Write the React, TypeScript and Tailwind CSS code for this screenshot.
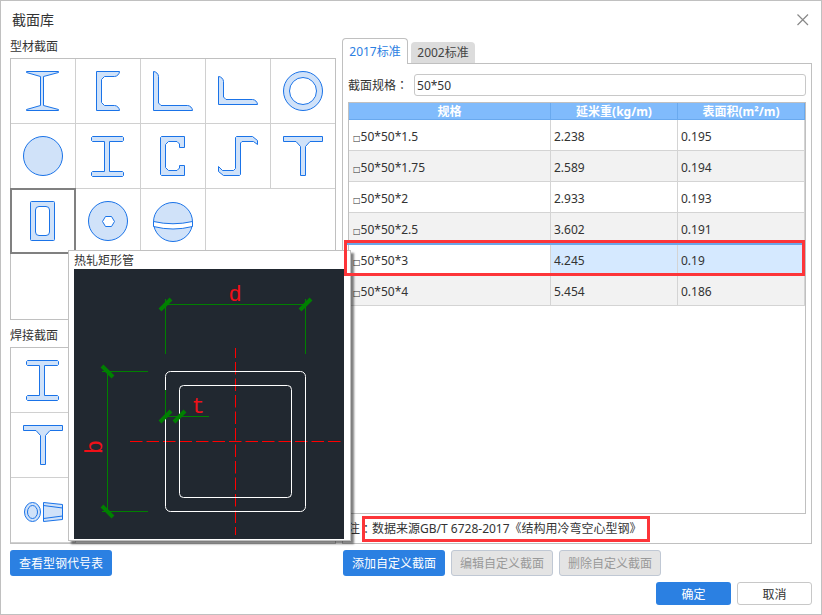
import React, { useMemo, useState } from "react";

type Shape = {
  id: string;
  name: string;
  icon: React.ReactNode;
};

type SpecRow = {
  spec: string;
  weight: string;
  area: string;
};

const FILL = "#d0e2f9";
const STROKE = "#1a73e8";

// 型钢截面图标
const beamIcon = <path d="M4.5 .5H34.5L35.5 1.5V4.5L34.5 5.5H21.5V35.5H34.5L35.5 36.5V39.5L34.5 40.5H4.5L3.5 39.5V36.5L4.5 35.5H16.5V5.5H4.5L3.5 4.5V1.5Z" />;
const teeIcon = <path d="M.5 .5H39.5V5.5H27L22.5 10.5V39.5H17.5V10.5L13 5.5H.5Z" />;

const PROFILE_SHAPES: Shape[] = [
  { id: "i", name: "工字钢", icon: <path d="M3.5 .5H35.5V1.5L20.5 5.5V34.5L35.5 38.5V39.5H3.5V38.5L17.5 34.5V5.5L3.5 1.5Z" /> },
  { id: "channel", name: "槽钢", icon: <path d="M8.5 .5H31.5C31.5 3 29 5.5 26.5 5.5H16.5L13.5 8.5V31.5L16.5 34.5H26.5C29 34.5 31.5 37 31.5 39.5H8.5Z" /> },
  { id: "angle", name: "等边角钢", icon: <path d="M.5 .5C3 .5 5.5 3 5.5 5.5V32L8 34.5H34.5C37 34.5 39.5 37 39.5 39.5H.5Z" /> },
  { id: "angle2", name: "不等边角钢", icon: <path d="M.5 5.5C3 5.5 5.5 8 5.5 10.5V26L8 28.5H34.5C37 28.5 39.5 31 39.5 33.5H.5Z" /> },
  {
    id: "pipe",
    name: "钢管",
    icon: (
      <>
        <circle cx="20" cy="20" r="19.5" />
        <circle cx="20" cy="20" r="13.5" fill="#fff" />
      </>
    ),
  },
  { id: "round", name: "圆钢", icon: <circle cx="20" cy="20" r="19.5" /> },
  { id: "h", name: "H型钢", icon: beamIcon },
  { id: "c", name: "C型钢", icon: <path d="M8.5 .5H31.5V11.5H26.5V8L24 5.5H15.5L12.5 8.5V31.5L15.5 34.5H24L26.5 32V29.5H31.5V39.5H8.5L7.5 38.5V1.5Z" /> },
  { id: "z", name: "Z型钢", icon: <path d="M18.5 .5H34.5L39.5 4.5V8.5L35.5 5.5H24L22.5 7V38.5L21.5 39.5H5.5L.5 35.5V30.5L4.5 34.5H15.5L17.5 32.5V1.5Z" /> },
  { id: "t", name: "T型钢", icon: teeIcon },
  {
    id: "rect",
    name: "热轧矩形管",
    icon: (
      <>
        <rect x="7.5" y=".5" width="24" height="39" rx="1" />
        <rect x="12.5" y="5.5" width="14" height="29" rx="3.5" fill="#fff" />
      </>
    ),
  },
  {
    id: "bolt",
    name: "螺栓球",
    icon: (
      <>
        <circle cx="20" cy="20" r="19.5" />
        <path d="M14.5 20.5L17.5 15.5H23.5L26.5 20.5L23.5 25.5H17.5Z" fill="#fff" />
      </>
    ),
  },
  {
    id: "ball",
    name: "焊接球",
    icon: (
      <>
        <circle cx="20" cy="21" r="19.5" />
        <path d="M.5 20.5Q20 25 39.5 20.5V25.5Q20 30.5 .5 25.5Z" fill="#fff" />
      </>
    ),
  },
];

const WELD_SHAPES: Shape[] = [
  { id: "weld-h", name: "焊接H型钢", icon: beamIcon },
  { id: "weld-t", name: "焊接T型钢", icon: teeIcon },
  {
    id: "cone",
    name: "锥管",
    icon: (
      <>
        <ellipse cx="9.5" cy="22" rx="8" ry="9.5" />
        <ellipse cx="9.5" cy="22" rx="5" ry="6.5" />
        <path d="M20.5 12.5L39.5 14.5V29.5L20.5 31.5Z" />
        <path d="M20.5 15.5L39.5 18M20.5 28.5L39.5 26" />
      </>
    ),
  },
];

const SPECS: Record<string, SpecRow[]> = {
  "2017标准": [
    { spec: "50*50*1.5", weight: "2.238", area: "0.195" },
    { spec: "50*50*1.75", weight: "2.589", area: "0.194" },
    { spec: "50*50*2", weight: "2.933", area: "0.193" },
    { spec: "50*50*2.5", weight: "3.602", area: "0.191" },
    { spec: "50*50*3", weight: "4.245", area: "0.19" },
    { spec: "50*50*4", weight: "5.454", area: "0.186" },
  ],
  "2002标准": [],
};

const TABS = ["2017标准", "2002标准"];

// 全角冒号居中显示
function Colon() {
  return <span className="font-['Noto_Sans_CJK_TC',sans-serif]">：</span>;
}

function SectionDiagram() {
  return (
    <svg width="270" height="270" viewBox="0 0 270 270" className="block bg-[#212830]" fill="none">
      {/* 中心线 */}
      <g stroke="#f00" strokeDasharray="12.5 4">
        <path d="M161.5 79V89M161.5 93V266" />
        <path d="M56 172.5H267" />
      </g>
      {/* 截面轮廓 */}
      <g stroke="#fff">
        <rect x="91.5" y="102.5" width="140" height="140" rx="5" />
        <rect x="105.5" y="116.5" width="112" height="112" rx="4" />
      </g>
      {/* 尺寸线 */}
      <g stroke="#008000">
        <path d="M91.5 30V85M231.5 30V85M91.5 35.5H231.5" />
        <path d="M28 102.5H74M28 242.5H74M33.5 102.5V242.5" />
        <path d="M91.5 121V147.5H135" />
        <path strokeWidth="4" d="M86 41L97 30M226 41L237 30M86 153L97 142M100 153L111 142M28 97L39 108M28 237L39 248" />
      </g>
      <g fill="#f01018" fontFamily="Liberation Mono, monospace" fontSize="24" textAnchor="middle">
        <text x="161" y="32" fontSize="22">
          d
        </text>
        <text x="124" y="144" fontSize="22">
          t
        </text>
        <text transform="translate(28 178) rotate(-90)">b</text>
      </g>
    </svg>
  );
}

type ShapeListProps = {
  shapes: Shape[];
  selected: string;
  hovered?: string;
  onSelect: (id: string) => void;
  className: string;
};

function ShapeList({ shapes, selected, hovered, onSelect, className }: ShapeListProps) {
  return (
    <ul className={className}>
      {shapes.map((s) => (
        <li key={s.id} className="relative border-r border-b border-[#d0d0d0]">
          <button
            aria-label={s.name}
            onClick={() => onSelect(s.id)}
            className={
              selected === s.id
                ? "flex h-full w-full items-center justify-center outline-2 -outline-offset-1 outline-[#808080]"
                : "flex h-full w-full items-center justify-center"
            }
          >
            <svg width="40" height="40" viewBox="0 0 40 40" className="overflow-visible" fill={FILL} stroke={STROKE}>
              {s.icon}
            </svg>
          </button>

          {hovered === s.id && (
            <div className="absolute top-[61px] left-[57px] z-10 w-[283px] border border-[#c0c0c0] bg-white pr-1.5 pb-px pl-[5px] shadow-[3px_3px_2px_rgba(0,0,0,0.5)]">
              <p className="h-[18px] leading-5">{s.name}</p>
              <SectionDiagram />
            </div>
          )}
        </li>
      ))}
    </ul>
  );
}

export default function App() {
  const [tab, setTab] = useState("2017标准");
  const [shape, setShape] = useState("rect");
  const [keyword, setKeyword] = useState("50*50");
  const [current, setCurrent] = useState("50*50*3");

  const rows = useMemo(() => SPECS[tab].filter((r) => r.spec.includes(keyword.trim())), [tab, keyword]);

  return (
    <main className="flex min-h-screen flex-col border border-[#c0c0c0] bg-white px-[9px] pb-[9px] font-['Noto_Sans','Noto_Sans_CJK_SC',sans-serif] text-xs leading-4 text-[#333]">
      <header className="flex h-[37px] items-center justify-between pr-[3px] pl-0.5">
        <h1 className="text-sm">截面库</h1>
        <button aria-label="关闭">
          <svg width="12" height="12" viewBox="0 0 12 12" fill="none" stroke="#888" strokeWidth="1.2">
            <path d="M.5 .5L11 11M11 .5L.5 11" />
          </svg>
        </button>
      </header>

      <div className="flex flex-1 gap-1.5">
        {/* 左侧：截面类型 */}
        <div className="flex w-[326px] shrink-0 flex-col">
          <h2 className="h-5 leading-[18px]">型材截面</h2>
          <div className="h-[262px] border border-[#c0c0c0]">
            <ShapeList
              shapes={PROFILE_SHAPES}
              selected={shape}
              hovered="rect"
              onSelect={setShape}
              className="grid auto-rows-[65px] grid-cols-[repeat(4,65px)_1fr] [&>li:nth-child(5n)]:border-r-0"
            />
          </div>
          <h2 className="flex h-[27px] items-center pt-1">焊接截面</h2>
          <div className="min-h-[197px] flex-1 border border-[#c0c0c0]">
            <ShapeList shapes={WELD_SHAPES} selected={shape} onSelect={setShape} className="grid auto-rows-[65px] grid-cols-[65px]" />
          </div>
        </div>

        {/* 右侧：规格表 */}
        <div className="flex min-w-0 flex-1 flex-col">
          <div role="tablist" className="flex h-[25px] items-end gap-[3px]">
            {TABS.map((t) => (
              <button
                key={t}
                role="tab"
                aria-selected={t === tab}
                onClick={() => setTab(t)}
                className={
                  t === tab
                    ? "relative -mb-px h-[26px] w-[66px] rounded-t border border-b-0 border-[#c0c0c0] bg-white text-[#2b80e2]"
                    : "h-[21px] w-16 rounded-t bg-[#dcdcdc] text-[#444]"
                }
              >
                {t}
              </button>
            ))}
          </div>

          <section className="flex flex-1 flex-col border border-[#c0c0c0] px-[5px] pt-2.5">
            <div className="flex h-[22px] items-center gap-1.5">
              <label htmlFor="spec" className="shrink-0">
                截面规格
                <Colon />
              </label>
              <input
                id="spec"
                value={keyword}
                onChange={(e) => setKeyword(e.target.value)}
                className="h-full min-w-0 flex-1 rounded-[3px] border border-[#c8c8c8] px-0.5 outline-none focus:border-[#2b80e2]"
              />
            </div>

            <div className="mt-1.5 flex-1 border border-[#c0c0c0]">
              <table className="w-full table-fixed border-separate border-spacing-0">
                <thead>
                  <tr className="h-[17px] bg-[#80bbfc] leading-[14px] text-white">
                    <th className="border-r border-b border-[#69a9ee] p-0 pt-0.5">规格</th>
                    <th className="w-[127px] border-r border-b border-[#69a9ee] p-0 pt-0.5">延米重(kg/m)</th>
                    <th className="w-[127px] border-r border-b border-[#69a9ee] p-0 pt-0.5">表面积(m²/m)</th>
                  </tr>
                </thead>
                <tbody>
                  {rows.map((r) => (
                    <tr key={r.spec} onClick={() => setCurrent(r.spec)} className="relative h-[31px] even:bg-[#f2f2f2]">
                      <td
                        className={
                          r.spec === current ? "border-r border-b border-[#d4d4d4] bg-white p-0 pt-[3px] pl-1" : "border-r border-b border-[#d4d4d4] p-0 pt-[3px] pl-1"
                        }
                      >
                        <span className="font-['DejaVu_Sans',sans-serif] text-[8px] leading-none">□</span>
                        {r.spec}
                        {r.spec === current && (
                          <div className="pointer-events-none absolute -top-1 right-0 -left-[5px] z-20 h-9 border-3 border-[#fd3539] shadow-[inset_0_2px_0_#6ca6e8]" />
                        )}
                      </td>
                      {[r.weight, r.area].map((v, i) => (
                        <td
                          key={i}
                          className={
                            r.spec === current
                              ? "border-r border-b border-[#d4d4d4] bg-[#d5e9ff] p-0 pt-[3px] pl-[3px]"
                              : "border-r border-b border-[#d4d4d4] p-0 pt-[3px] pl-[3px]"
                          }
                        >
                          {v}
                        </td>
                      ))}
                    </tr>
                  ))}
                </tbody>
              </table>
            </div>

            <p className="flex h-[29px] items-center">
              注
              <Colon />
              <span className="relative">
                数据来源GB/T 6728-2017《结构用冷弯空心型钢》
                <span className="pointer-events-none absolute -inset-y-[5px] -right-2 -left-2.5 z-20 border-3 border-[#fd3539]" />
              </span>
            </p>
          </section>
        </div>
      </div>

      <div className="mt-1.5 flex gap-[7px]">
        <div className="w-[326px] shrink-0">
          <button className="h-[26px] w-[102px] rounded-[3px] bg-[#2b80e2] pt-px text-white">查看型钢代号表</button>
        </div>
        <div className="flex gap-1.5">
          <button className="h-[26px] w-[102px] rounded-[3px] bg-[#2b80e2] pt-px text-white">添加自定义截面</button>
          <button disabled className="h-[26px] w-[102px] rounded-[3px] border border-[#c0c8d4] bg-[#e4e4e4] pt-px text-[#999]">
            编辑自定义截面
          </button>
          <button disabled className="h-[26px] w-[102px] rounded-[3px] border border-[#c0c8d4] bg-[#e4e4e4] pt-px text-[#999]">
            删除自定义截面
          </button>
        </div>
      </div>

      <footer className="mt-1.5 flex justify-end gap-1.5">
        <button className="h-[23px] w-[75px] rounded-[3px] bg-[#2b80e2] pt-0.5 text-white">确定</button>
        <button className="h-[23px] w-[75px] rounded-[3px] border border-[#c8c8c8] bg-white pt-0.5">取消</button>
      </footer>
    </main>
  );
}
